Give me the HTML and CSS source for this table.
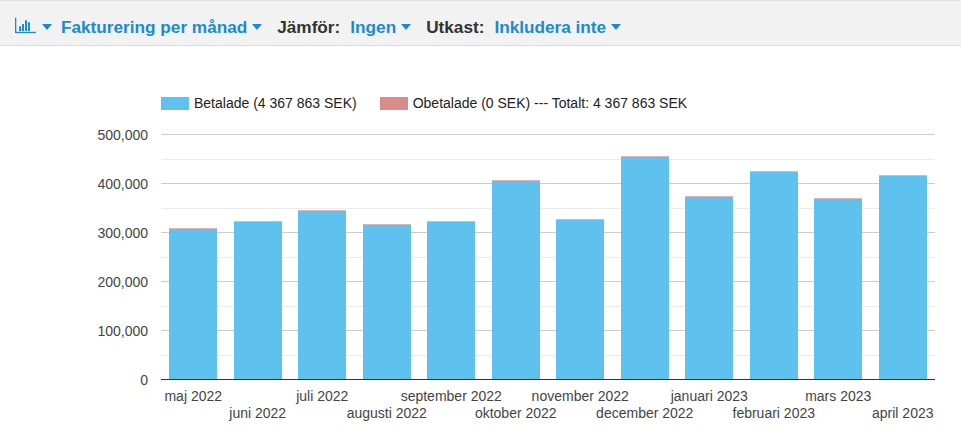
FILE: index.html
```html
<!DOCTYPE html>
<html lang="sv">
<head>
<meta charset="utf-8">
<title>Fakturering per månad</title>
<link rel="stylesheet" href="styles.css">
</head>
<body>
<header class="toolbar">
  <span class="chart-icon"><svg width="21" height="17" viewBox="0 0 21 17"><rect x="0" y="0.7" width="1.3" height="15.3" fill="currentColor"/><rect x="0" y="14.8" width="21" height="1.3" fill="currentColor"/><rect x="4" y="9.3" width="2" height="4.7" fill="currentColor"/><rect x="7" y="7" width="2" height="7" fill="currentColor"/><rect x="10" y="3.3" width="2" height="10.7" fill="currentColor"/><rect x="13" y="5.3" width="2" height="8.7" fill="currentColor"/></svg></span><span class="caret caret-first"></span>
  <span class="link">Fakturering per månad</span><span class="caret"></span>
  <span class="label">Jämför:</span><span class="link">Ingen</span><span class="caret"></span>
  <span class="label">Utkast:</span><span class="link">Inkludera inte</span><span class="caret"></span>
</header>

<main class="chart">
  <div class="legend">
    <span class="legend-item"><span class="swatch swatch-paid"></span>Betalade (4 367 863 SEK)</span>
    <span class="legend-item"><span class="swatch swatch-unpaid"></span>Obetalade (0 SEK) --- Totalt: 4 367 863 SEK</span>
  </div>

  <div class="y-axis">
    <div class="tick">500,000</div>
    <div class="tick">400,000</div>
    <div class="tick">300,000</div>
    <div class="tick">200,000</div>
    <div class="tick">100,000</div>
    <div class="tick">0</div>
  </div>

  <div class="plot">
    <div class="grid-lines">
      <div class="gl major"></div><div class="gl minor"></div>
      <div class="gl major"></div><div class="gl minor"></div>
      <div class="gl major"></div><div class="gl minor"></div>
      <div class="gl major"></div><div class="gl minor"></div>
      <div class="gl major"></div><div class="gl minor"></div>
    </div>
    <div class="bars">
      <div class="slot"><div class="bar" style="height:61.5%"></div></div>
      <div class="slot"><div class="bar" style="height:64.5%"></div></div>
      <div class="slot"><div class="bar" style="height:69.0%"></div></div>
      <div class="slot"><div class="bar" style="height:63.1%"></div></div>
      <div class="slot"><div class="bar" style="height:64.5%"></div></div>
      <div class="slot"><div class="bar" style="height:81.2%"></div></div>
      <div class="slot"><div class="bar" style="height:65.3%"></div></div>
      <div class="slot"><div class="bar" style="height:91.0%"></div></div>
      <div class="slot"><div class="bar" style="height:74.7%"></div></div>
      <div class="slot"><div class="bar" style="height:84.9%"></div></div>
      <div class="slot"><div class="bar" style="height:73.9%"></div></div>
      <div class="slot"><div class="bar" style="height:83.3%"></div></div>
    </div>
  </div>

  <div class="x-axis">
    <div class="xl">maj 2022</div>
    <div class="xl low">juni 2022</div>
    <div class="xl">juli 2022</div>
    <div class="xl low">augusti 2022</div>
    <div class="xl">september 2022</div>
    <div class="xl low">oktober 2022</div>
    <div class="xl">november 2022</div>
    <div class="xl low">december 2022</div>
    <div class="xl">januari 2023</div>
    <div class="xl low">februari 2023</div>
    <div class="xl">mars 2023</div>
    <div class="xl low">april 2023</div>
  </div>
</main>
</body>
</html>
```

FILE: styles.css
```css
* { box-sizing: border-box; }

html, body {
  margin: 0;
  padding: 0;
  background: #fff;
  font-family: "Liberation Sans", Arial, sans-serif;
}

.toolbar {
  display: flex;
  align-items: center;
  height: 46px;
  padding: 7px 0 0 15px;
  background: #f2f2f2;
  border-top: 1px solid #e2e2e2;
  border-bottom: 1px solid #dcdcdc;
  font-size: 17.2px;
  font-weight: bold;
  line-height: 20px;
  white-space: nowrap;
}

.chart-icon {
  display: flex;
  color: #1a8ad4;
  margin-top: -2px;
}

.link { color: #1a8ad4; }

.label {
  color: #333;
  margin-right: 10px;
}

.caret {
  width: 0;
  height: 0;
  border-left: 5.5px solid transparent;
  border-right: 5.5px solid transparent;
  border-top: 6px solid #1a8ad4;
  margin-left: 5px;
  margin-right: 15px;
}

.caret-first {
  margin-left: 6px;
  margin-right: 9px;
}

.chart {
  display: grid;
  grid-template-columns: 161px 774px;
  padding-top: 49px;
}

.legend {
  grid-column: 2;
  display: flex;
  align-items: center;
  height: 16px;
  margin-bottom: 23px;
  font-size: 14px;
  line-height: 16px;
  color: #222;
  white-space: nowrap;
}

.legend-item {
  display: flex;
  align-items: center;
  margin-right: 23px;
}

.swatch {
  width: 28px;
  height: 13px;
  margin-right: 5px;
}

.swatch-paid { background: #5ec1ee; }
.swatch-unpaid { background: #d98c8c; }

.y-axis {
  grid-column: 1;
  grid-row: 2;
  display: flex;
  flex-direction: column;
  justify-content: space-between;
  height: 246px;
  padding: 0 13px 0 0;
  font-size: 14px;
  color: #444;
}

.tick {
  height: 1px;
  display: flex;
  align-items: center;
  justify-content: flex-end;
  line-height: 16px;
}

.plot {
  grid-column: 2;
  grid-row: 2;
  display: grid;
  height: 246px;
  border-bottom: 1px solid #333;
}

.grid-lines, .bars {
  grid-area: 1 / 1;
}

.grid-lines {
  display: flex;
  flex-direction: column;
}

.gl { flex: 1; border-top: 1px solid #ccc; }
.gl.minor { border-top-color: #ebebeb; }

.bars {
  display: flex;
  align-items: stretch;
}

.slot {
  flex: 1;
  display: flex;
  align-items: flex-end;
  justify-content: center;
}

.bar {
  width: 48px;
  background: #5ec1ee;
  border-top: 1px solid #e6b4b4;
}

.x-axis {
  grid-column: 2;
  grid-row: 3;
  display: flex;
  padding-top: 8px;
  font-size: 14px;
  line-height: 17px;
  color: #444;
}

.xl {
  flex: 1;
  display: flex;
  justify-content: center;
  white-space: nowrap;
  width: 0;
}

.xl.low { padding-top: 17px; }
```
